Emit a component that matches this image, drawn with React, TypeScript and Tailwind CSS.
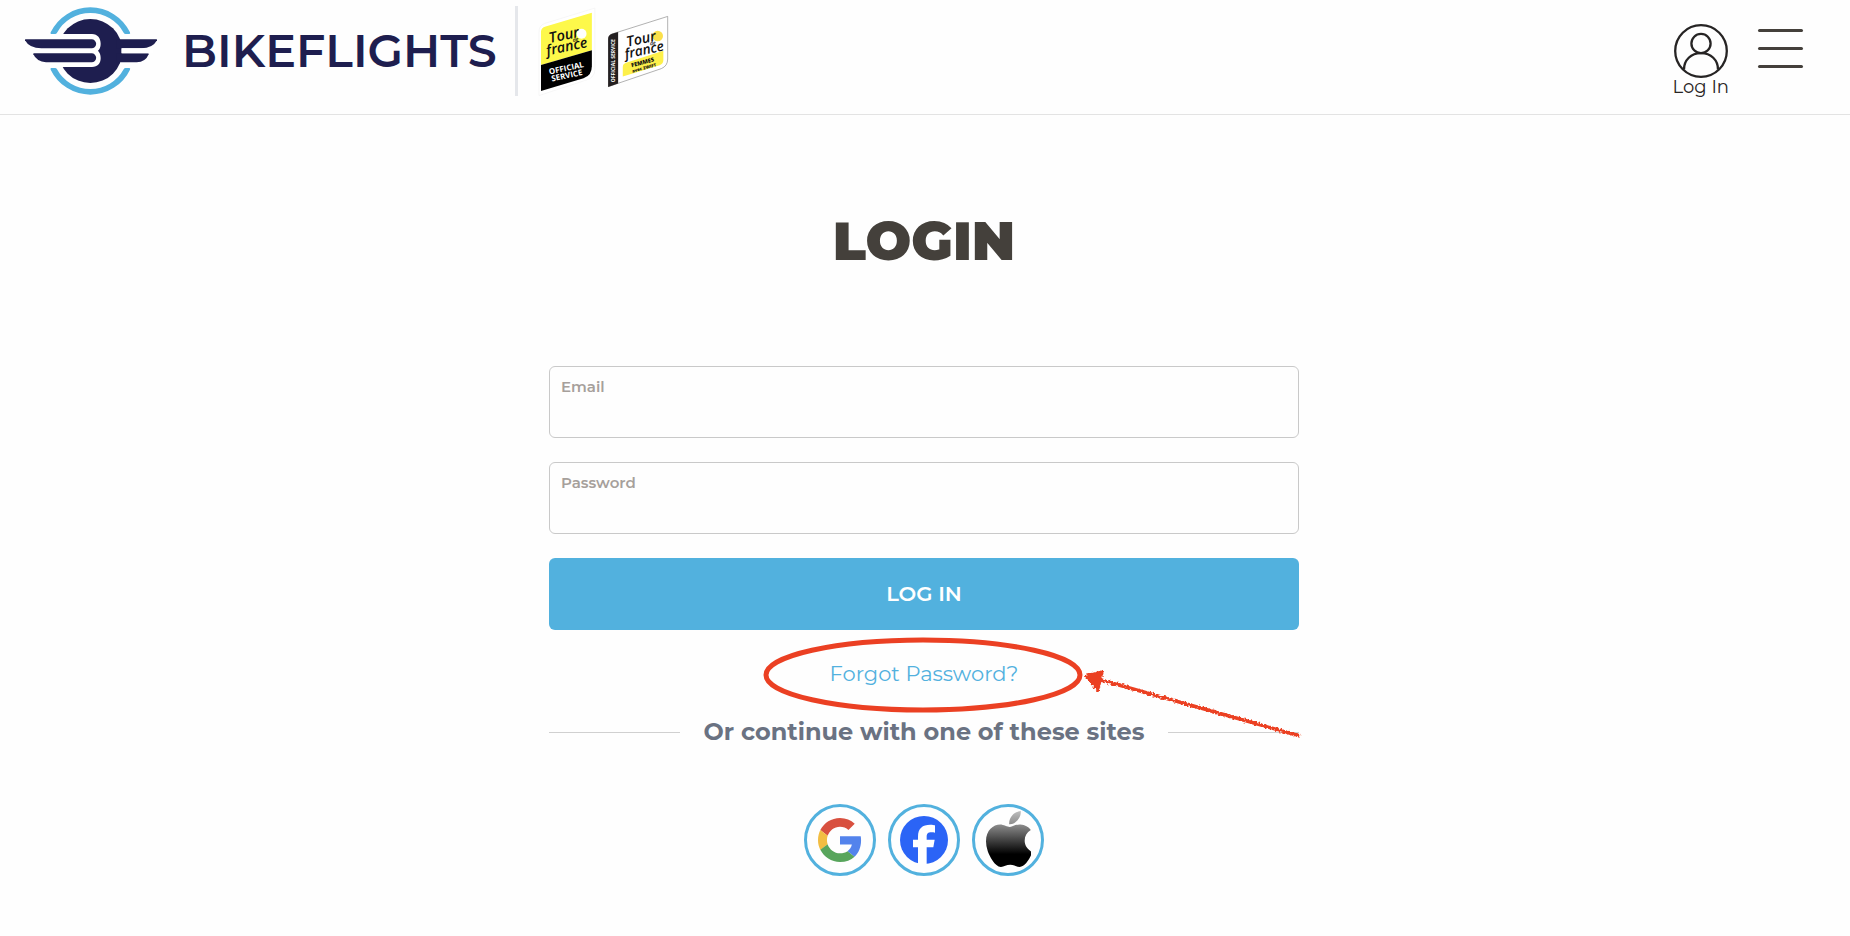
import type { ReactNode } from 'react';

const BrandMark = () => (
  <svg viewBox="72 18 402 270" className="h-[90px] w-[134px] shrink-0" aria-hidden="true">
    <g fill="#52b1de">
      <path d="M154 102Q150 102 152 97A132 132 0 0 1 390 97Q392 102 388 102H377Q373 102 371 98A114 114 0 0 0 171 98Q169 102 165 102Z" />
      <path d="M154 204Q150 204 152 209A132 132 0 0 0 390 209Q392 204 388 204H377Q373 204 371 208A114 114 0 0 1 171 208Q169 204 165 204Z" />
    </g>
    <circle cx="271" cy="153" r="96" fill="#1e1e4f" />
    <path
      fill="#fff"
      d="M150 102H276C293 102 302 115 302 131C302 141 299 147 294 152C299 157 302 164 302 174C302 190 293 201 276 201H150Z"
    />
    <g fill="#1e1e4f">
      <path d="M77 118H275A13 13 0 0 1 275 145H124Q88 145 75 121Q74 118 77 118Z" />
      <path d="M102 160H275A13 13 0 0 1 275 187H138Q110 185 100 163Q99 160 102 160Z" />
      <path d="M350 118H469Q472 118 471 121Q458 145 424 145H350Z" />
      <path d="M350 160H444Q447 160 446 163Q437 186 410 187H350Z" />
    </g>
    <path fill="#fff" d="M364 145H460V160H364Z" />
  </svg>
);

const TourBadges = () => (
  <svg
    viewBox="80 15 400 270"
    className="h-[90px] w-[133px] shrink-0"
    fontFamily="'Open Sans', 'Liberation Sans', sans-serif"
    textAnchor="middle"
    role="img"
    aria-label="Tour de France official service"
  >
    <path d="M86 284V92Q86 73 104 67L254 21V206Q254 228 232 236Z" fill="#fff" stroke="#e6e6e6" />
    <path d="M92 192V92Q92 80 106 76L245 35V148Z" fill="#fdf84a" />
    <path d="M92 192L245 148V196Q245 224 220 232L92 270Z" fill="#000" />
    <circle cx="214" cy="98" r="15" fill="#fff" />
    <g transform="rotate(-12 168 120)" fontStyle="italic" fontWeight="600" fill="#111">
      <text x="165" y="116" fontSize="44">Tour</text>
      <text x="196" y="127" fontSize="16">de</text>
      <text x="166" y="151" fontSize="43">france</text>
    </g>
    <g
      transform="rotate(-12 168 205)"
      fill="#fff"
      fontFamily="'Liberation Sans Narrow', 'Open Sans', sans-serif"
      fontWeight="700"
    >
      <text x="169" y="210" fontSize="24">OFFICIAL</text>
      <text x="166" y="232" fontSize="24">SERVICE</text>
    </g>

    <path d="M295 257V113Q295 103 305 99L473 46V174Q473 195 454 203Z" fill="#fff" stroke="#8b8b8b" strokeWidth="2" />
    <path d="M294 258V113Q294 102 306 98L324 93V248Z" fill="#231f20" />
    <text transform="translate(315 179) rotate(-90)" fontSize="15" fontWeight="700" fill="#fff">
      OFFICIAL SERVICE
    </text>
    <circle cx="443" cy="105" r="16" fill="#fbe04b" />
    <g transform="rotate(-12 400 130)" fontStyle="italic" fontWeight="600" fill="#111">
      <text x="397" y="127" fontSize="43">Tour</text>
      <text x="428" y="138" fontSize="16">de</text>
      <text x="399" y="161" fontSize="41">france</text>
    </g>
    <path d="M338 227V198Q338 188 348 185L460 149V178Q460 188 449 193Z" fill="#fdf04a" />
    <g transform="rotate(-15 399 190)" fill="#111" fontWeight="800">
      <text x="399" y="190" fontSize="17">FEMMES</text>
      <text x="399" y="206" fontSize="13">avec ZWIFT</text>
    </g>
  </svg>
);

const UserIcon = () => (
  <svg viewBox="0 0 54 54" className="size-[54px]" fill="none" stroke="#262424" strokeWidth="2.3" aria-hidden="true">
    <circle cx="27" cy="27" r="25.8" />
    <circle cx="27" cy="19.5" r="9.6" />
    <path d="M10 45.500C10 36 17 29.200 27 29.200S44 36 44 45.500" />
  </svg>
);

const GoogleLogo = () => (
  <svg viewBox="0 0 48 48" className="size-11" aria-hidden="true">
    <path fill="#d8503f" d="M24 9.500c3.540 0 6.710 1.220 9.210 3.600l6.850-6.850C35.900 2.380 30.470 0 24 0 14.620 0 6.510 5.380 2.560 13.220l7.980 6.190C12.430 13.720 17.740 9.500 24 9.500z" />
    <path fill="#5383ec" d="M46.980 24.550c0-1.570-.150-3.090-.380-4.550H24v9.020h12.940c-.580 2.960-2.260 5.480-4.780 7.180l7.730 6c4.510-4.180 7.090-10.360 7.090-17.650z" />
    <path fill="#f2bd42" d="M10.530 28.590c-.480-1.450-.760-2.990-.760-4.590s.270-3.140.760-4.590l-7.980-6.190C.920 16.460 0 20.120 0 24c0 3.880.920 7.540 2.560 10.780l7.970-6.190z" />
    <path fill="#58a55c" d="M24 48c6.480 0 11.930-2.130 15.890-5.810l-7.730-6c-2.150 1.450-4.920 2.300-8.160 2.300-6.260 0-11.570-4.220-13.470-9.910l-7.980 6.190C6.510 42.620 14.620 48 24 48z" />
  </svg>
);

const FacebookLogo = () => (
  <svg viewBox="330 81 144 144" className="size-12" aria-hidden="true">
    <circle cx="402" cy="153" r="72" fill="#2b64f6" />
    <path
      fill="#fff"
      d="M384 225V175H369V152H384V143C384 118 397 107 421 107C427 107 432 108 435 109V131C432 130 428 130 424 130C414 130 410 134 410 144V152H434L430 175H410V225Z"
    />
  </svg>
);

const AppleLogo = () => (
  <svg viewBox="4 32 366 448" preserveAspectRatio="none" className="mb-0.5 h-14 w-[45px]" aria-hidden="true">
    <defs>
      <linearGradient id="apple-body" x1="0" y1="0" x2="0" y2="1">
        <stop offset="0" stopColor="#8c8c8c" />
        <stop offset="0.7" stopColor="#000" />
      </linearGradient>
      <linearGradient id="apple-leaf" x1="0" y1="0" x2="0" y2="1">
        <stop offset="0" stopColor="#bdbdbd" />
        <stop offset="1" stopColor="#8c8c8c" />
      </linearGradient>
    </defs>
    <path
      fill="url(#apple-body)"
      d="M318.700 268.700c-.200-36.700 16.400-64.400 50-84.800-18.800-26.900-47.200-41.700-84.700-44.600-35.500-2.800-74.300 20.700-88.500 20.700-15 0-49.400-19.700-76.400-19.700C63.300 141.200 4 184.800 4 273.500q0 39.300 14.400 81.200c12.800 36.700 59 126.700 107.200 125.200 25.200-.600 43-17.900 75.800-17.900 31.800 0 48.300 17.900 76.400 17.900 48.600-.700 90.400-82.500 102.600-119.300-65.200-30.700-61.700-90-61.700-91.900z"
    />
    <path
      fill="url(#apple-leaf)"
      d="M262.100 104.500c27.300-32.400 24.800-61.900 24-72.500-24.100 1.400-52 16.400-67.900 34.900-17.500 19.800-27.800 44.300-25.600 71.900 26.100 2 49.900-11.400 69.500-34.300z"
    />
  </svg>
);

// Red ellipse and hand-drawn arrow pointing at the reset link
const Highlight = () => (
  <svg
    viewBox="0 0 540 104"
    className="pointer-events-none absolute -top-[17px] left-1/2 -ml-[161px] h-[104px] w-[540px]"
    aria-hidden="true"
  >
    <defs>
      <filter id="rough" x="-5%" y="-10%" width="110%" height="120%">
        <feTurbulence type="fractalNoise" baseFrequency="0.5" numOctaves="2" seed="4" result="noise" />
        <feDisplacementMap in="SourceGraphic" in2="noise" scale="4" xChannelSelector="R" yChannelSelector="G" />
      </filter>
    </defs>
    <ellipse cx="160" cy="38" rx="157" ry="35" fill="none" stroke="#eb4023" strokeWidth="5" />
    <g filter="url(#rough)" stroke="#eb4023" fill="#eb4023" strokeLinejoin="round">
      <path d="M338 43L537 99" strokeWidth="3.5" />
      <path d="M322 39L340 34L335 54Z" strokeWidth="2" />
    </g>
  </svg>
);

const Field = ({ label, type }: { label: string; type: string }) => (
  <label className="flex h-18 flex-col rounded-md border border-[#c9c9c9] px-[11px] pt-2 pb-1">
    <span className="text-[15px] leading-6 font-semibold text-stone-400">{label}</span>
    <input type={type} className="min-h-0 w-full flex-1 text-base text-stone-700 outline-none" />
  </label>
);

const SocialButton = ({ label, children }: { label: string; children: ReactNode }) => (
  <button
    type="button"
    aria-label={label}
    className="flex size-18 items-center justify-center rounded-full border-3 border-[#52b1de]"
  >
    {children}
  </button>
);

const Header = () => (
  <header className="flex items-start justify-between border-b border-[#e3e3e3] pt-[6px] pr-[47px] pb-[18px] pl-6">
    <div className="flex items-center">
      <a href="#" className="flex items-center gap-6">
        <BrandMark />
        <span className="text-[46px] leading-none font-semibold text-[#1e1e4f]">BIKEFLIGHTS</span>
      </a>
      <span className="mr-[19px] ml-[18px] h-[90px] w-[3px] bg-gray-200" />
      <TourBadges />
    </div>
    <div className="flex items-start gap-[29px] pt-[18px]">
      <a href="#" className="flex flex-col items-center text-lg leading-[18px] text-stone-800">
        <UserIcon />
        Log In
      </a>
      <button type="button" aria-label="Menu" className="mt-[5px] flex w-[45px] flex-col gap-[15px]">
        <span className="h-[3px] rounded-full bg-stone-700" />
        <span className="h-[3px] rounded-full bg-stone-700" />
        <span className="h-[3px] rounded-full bg-stone-700" />
      </button>
    </div>
  </header>
);

export default function App() {
  return (
    <div className="min-h-screen bg-[#fefefe] pr-0.5 font-[Montserrat,Inter,sans-serif]">
      <div className="-mr-0.5">
        <Header />
      </div>
      <main className="mx-auto max-w-[750px]">
        <h1 className="pt-24 text-center text-[54px] leading-[60px] font-black text-stone-700">LOGIN</h1>
        <form className="mt-[95px] flex flex-col gap-6" onSubmit={(e) => e.preventDefault()}>
          <Field label="Email" type="email" />
          <Field label="Password" type="password" />
          <button type="submit" className="h-18 rounded-md bg-[#52b1de] text-[21px] font-semibold text-white">
            LOG IN
          </button>
          <div className="relative h-9 text-center text-[21px] leading-10">
            <a href="#" className="text-[#52b1de]">
              Forgot Password?
            </a>
            <Highlight />
          </div>
          <div className="flex items-center gap-6">
            <span className="h-px flex-1 bg-[#d0d0d0]" />
            <span className="text-2xl leading-9 font-bold text-gray-500">Or continue with one of these sites</span>
            <span className="h-px flex-1 bg-[#d0d0d0]" />
          </div>
          <div className="flex justify-center gap-3 pt-[30px]">
            <SocialButton label="Continue with Google">
              <GoogleLogo />
            </SocialButton>
            <SocialButton label="Continue with Facebook">
              <FacebookLogo />
            </SocialButton>
            <SocialButton label="Continue with Apple">
              <AppleLogo />
            </SocialButton>
          </div>
        </form>
      </main>
    </div>
  );
}
